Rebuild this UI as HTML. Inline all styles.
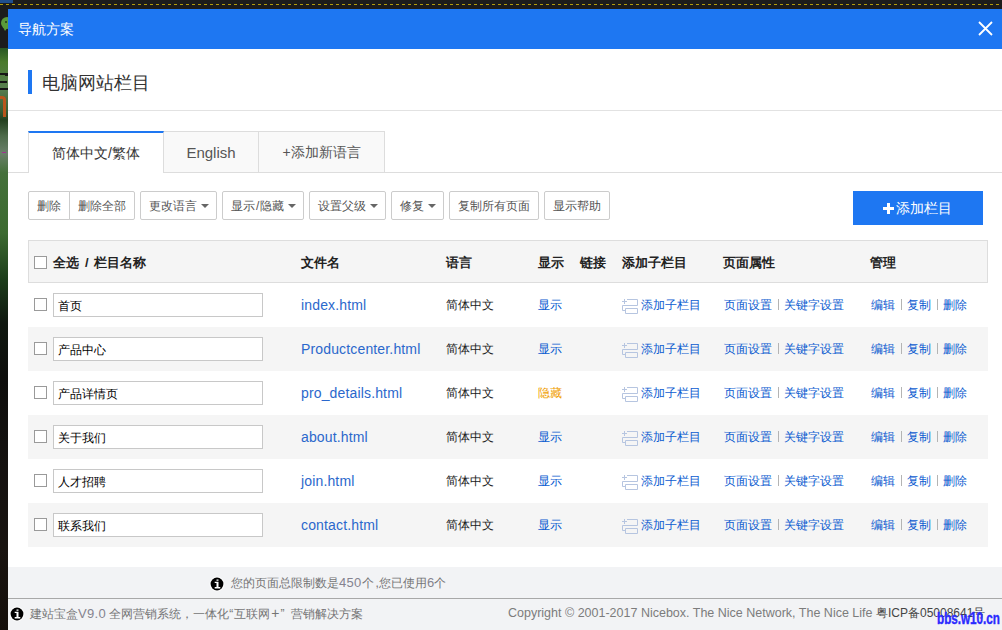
<!DOCTYPE html>
<html><head><meta charset="utf-8">
<style>
*{box-sizing:border-box;margin:0;padding:0}
html,body{width:1002px;height:630px;overflow:hidden}
body{position:relative;background:#1c1c1c;font-family:"Liberation Sans",sans-serif;color:#333}
.a{position:absolute;white-space:nowrap}
#topbar{left:0;top:0;width:13px;height:3px;background:#1f4f8f}
#dash{left:0;top:4px;width:1002px;height:1px;background:repeating-linear-gradient(90deg,#b39c0c 0 3px,transparent 3px 6px)}
#strip{left:0;top:48px;width:8px;height:582px;background:linear-gradient(180deg,#285622 0,#4a7a2c 14px,#587f50 40px,#3a5f35 62px,#24401f 72px,#4d6a4a 88px,#6a806a 105px,#44703a 125px,#3c6a30 185px,#1c3c1a 232px,#101810 275px,#0e0e0c 330px,#151210 420px,#191410 500px,#140e0a 582px)}
#modal{left:8px;top:9px;width:994px;height:621px;background:#fff}
#hdr{left:8px;top:9px;width:994px;height:40px;background:#1e77f2}
#hdr .t{left:10px;top:12px;font-size:14px;line-height:16px;color:#fff}
#close{left:970px;top:12px;width:15px;height:15px}
#bar{left:28px;top:70px;width:4px;height:24px;background:#1e77f2}
#sect{left:42px;top:73px;font-size:18px;line-height:20px;color:#333}
#div1{left:8px;top:110px;width:994px;height:1px;background:#e2e2e2}
#tabline{left:8px;top:172px;width:994px;height:1px;background:#ddd}
.tab{position:absolute;top:131px;height:41px;border:1px solid #ddd;border-bottom:none;background:#f9f9f9;font-size:14px;line-height:41px;text-align:center;color:#555}
.tab.on{background:#fff;border-top:2px solid #1e77f2;height:42px;z-index:2;color:#333;line-height:41px}
.btn{position:absolute;top:191px;height:29px;border:1px solid #ccc;border-radius:2px;background:#fff;font-size:12px;line-height:29px;color:#555;padding:0 8px;white-space:nowrap}
.caret{display:inline-block;width:0;height:0;border-left:4px solid transparent;border-right:4px solid transparent;border-top:4px solid #666;vertical-align:middle;margin-left:4px;margin-top:-2px}
#add{left:853px;top:191px;width:130px;height:34px;background:#1e77f2;color:#fff;font-size:14px;line-height:34px}
.plus{position:absolute;left:30px;top:12px;width:11px;height:11px;background:linear-gradient(#fff,#fff) center/3px 11px no-repeat,linear-gradient(#fff,#fff) center/11px 3px no-repeat}
.at{position:absolute;left:43px;top:0}
#thead{left:28px;top:240px;width:960px;height:43px;background:#f5f5f5;border:1px solid #ddd}
.row{left:28px;width:960px;height:44px}
.row.s{background:#f5f5f5}
.cb{width:13px;height:13px;border:1px solid #9a9a9a;background:#fff}
.c{font-size:12px;line-height:45px;color:#222}
.h{font-size:13px;font-weight:bold;color:#222;line-height:45px}
.sl{margin:0 5px 0 6px}
.inp{width:210px;height:24px;border:1px solid #c8c8c8;background:#fff;font-size:12px;line-height:24px;padding-left:4px;color:#000}
.fn{font-size:14px;color:#2b68cc;letter-spacing:.15px}
.lk{color:#0b5bd0}
.sep{display:inline-block;width:1px;height:11px;background:#b4b4b4;vertical-align:middle;margin:-2px 5px 0 6px}
.hid{color:#f0a000}
.ic{vertical-align:middle;margin-right:3px;margin-top:-2px}
#foot1{left:8px;top:567px;width:994px;height:31px;background:#f2f3f5}
#fline{left:8px;top:598px;width:994px;height:1px;background:#a8a8a8}
#foot2{left:8px;top:599px;width:994px;height:31px;background:#f2f3f5}
.ftxt{font-size:12px;line-height:31px;color:#757575}
.dg{font-size:13px;letter-spacing:.3px;color:#85838f}
.copy{font-size:12.5px;color:#7c7c7c}
.info{display:inline-block;vertical-align:middle;margin:-3px 0 0 -1px;position:relative;top:1.5px}
.wm{font-family:"Liberation Sans",sans-serif;font-weight:bold;font-size:16px;line-height:16px;color:#2a2aff;-webkit-text-stroke:.4px #2a2aff;transform:scaleX(.73);transform-origin:0 0}
#wx{left:1px;top:17px;width:12px;height:12px;border-radius:50%;background:#5a9a3a}
#wxt{left:3px;top:27px;width:0;height:0;border-left:2px solid transparent;border-right:3px solid transparent;border-top:4px solid #5a9a3a}
#ch1{left:0;top:73px;width:8px;height:17px;border-top:2px solid #151515;border-bottom:2px solid #151515}
#ch2{left:0;top:81px;width:7px;height:2px;background:#151515;box-shadow:5px -7px 0 0 #151515}
#org{left:0;top:96px;width:6px;height:21px;border-top:3px solid #b9561c;border-right:3px solid #b9561c;border-radius:0 4px 0 0}
#mg{left:2px;top:152px;width:4px;height:1px;background:#a03090}
#wxe{left:5px;top:21px;width:2px;height:2px;background:#203a18;border-radius:50%}

</style></head><body>
<div class="a" id="topbar"></div><div class="a" id="dash"></div><div class="a" id="strip"></div>
<div class="a" id="wx"></div><div class="a" id="wxt"></div><div class="a" id="ch1"></div><div class="a" id="ch2"></div><div class="a" id="org"></div><div class="a" id="mg"></div><div class="a" id="wxe"></div>
<div class="a" id="modal"></div>
<div class="a" id="hdr"><div class="a t">导航方案</div><svg class="a" id="close" viewBox="0 0 15 15"><path d="M1 1L14 14M14 1L1 14" stroke="#fff" stroke-width="1.8"/></svg></div>
<div class="a" id="bar"></div><div class="a" id="sect">电脑网站栏目</div><div class="a" id="div1"></div><div class="a" id="tabline"></div>
<div class="tab on" style="left:28px;width:136px">简体中文/繁体</div><div class="tab" style="left:163px;width:96px;font-size:15px">English</div><div class="tab" style="left:258px;width:127px">+添加新语言</div>
<div class="btn" style="left:28px;width:42px;border-radius:2px 0 0 2px">删除</div>
<div class="btn" style="left:69px;width:66px;border-radius:0 2px 2px 0">删除全部</div>
<div class="btn" style="left:140px;width:77px">更改语言<span class="caret"></span></div>
<div class="btn" style="left:222px;width:82px">显示<span style='margin:0 1px'>/</span>隐藏<span class="caret"></span></div>
<div class="btn" style="left:309px;width:77px">设置父级<span class="caret"></span></div>
<div class="btn" style="left:391px;width:53px">修复<span class="caret"></span></div>
<div class="btn" style="left:449px;width:90px">复制所有页面</div>
<div class="btn" style="left:544px;width:66px">显示帮助</div>
<div class="a" id="add"><span class="plus"></span><span class="at">添加栏目</span></div>
<div class="a" id="thead"></div>
<div class="a cb" style="left:34px;top:256px"></div>
<div class="a h" style="left:53px;top:240px">全选<span class=sl>/</span>栏目名称</div>
<div class="a h" style="left:301px;top:240px">文件名</div>
<div class="a h" style="left:446px;top:240px">语言</div>
<div class="a h" style="left:538px;top:240px">显示</div>
<div class="a h" style="left:580px;top:240px">链接</div>
<div class="a h" style="left:622px;top:240px">添加子栏目</div>
<div class="a h" style="left:723px;top:240px">页面属性</div>
<div class="a h" style="left:870px;top:240px">管理</div>
<div class="a cb" style="left:34px;top:298px"></div>
<div class="a inp" style="left:53px;top:293px">首页</div>
<div class="a c fn" style="left:301px;top:283px">index.html</div>
<div class="a c" style="left:446px;top:283px">简体中文</div>
<div class="a c lk" style="left:538px;top:283px">显示</div>
<svg class="a" width="17" height="16" viewBox="0 0 17 16" style="left:622px;top:299px"><path d="M2.5 0v5M0 2.5h5M5 0.5h10.5v6H0.5V11.5H3.5M3.5 9.5h12v5h-12z" stroke="#b6c5e0" stroke-width="1" fill="none"/></svg>
<div class="a c lk" style="left:641px;top:283px">添加子栏目</div>
<div class="a c lk" style="left:724px;top:283px">页面设置<span class="sep"></span>关键字设置</div>
<div class="a c lk" style="left:871px;top:283px">编辑<span class="sep"></span>复制<span class="sep"></span>删除</div>
<div class="a row s" style="top:327px"></div>
<div class="a cb" style="left:34px;top:342px"></div>
<div class="a inp" style="left:53px;top:337px">产品中心</div>
<div class="a c fn" style="left:301px;top:327px">Productcenter.html</div>
<div class="a c" style="left:446px;top:327px">简体中文</div>
<div class="a c lk" style="left:538px;top:327px">显示</div>
<svg class="a" width="17" height="16" viewBox="0 0 17 16" style="left:622px;top:343px"><path d="M2.5 0v5M0 2.5h5M5 0.5h10.5v6H0.5V11.5H3.5M3.5 9.5h12v5h-12z" stroke="#b6c5e0" stroke-width="1" fill="none"/></svg>
<div class="a c lk" style="left:641px;top:327px">添加子栏目</div>
<div class="a c lk" style="left:724px;top:327px">页面设置<span class="sep"></span>关键字设置</div>
<div class="a c lk" style="left:871px;top:327px">编辑<span class="sep"></span>复制<span class="sep"></span>删除</div>
<div class="a cb" style="left:34px;top:386px"></div>
<div class="a inp" style="left:53px;top:381px">产品详情页</div>
<div class="a c fn" style="left:301px;top:371px">pro_details.html</div>
<div class="a c" style="left:446px;top:371px">简体中文</div>
<div class="a c hid" style="left:538px;top:371px">隐藏</div>
<svg class="a" width="17" height="16" viewBox="0 0 17 16" style="left:622px;top:387px"><path d="M2.5 0v5M0 2.5h5M5 0.5h10.5v6H0.5V11.5H3.5M3.5 9.5h12v5h-12z" stroke="#b6c5e0" stroke-width="1" fill="none"/></svg>
<div class="a c lk" style="left:641px;top:371px">添加子栏目</div>
<div class="a c lk" style="left:724px;top:371px">页面设置<span class="sep"></span>关键字设置</div>
<div class="a c lk" style="left:871px;top:371px">编辑<span class="sep"></span>复制<span class="sep"></span>删除</div>
<div class="a row s" style="top:415px"></div>
<div class="a cb" style="left:34px;top:430px"></div>
<div class="a inp" style="left:53px;top:425px">关于我们</div>
<div class="a c fn" style="left:301px;top:415px">about.html</div>
<div class="a c" style="left:446px;top:415px">简体中文</div>
<div class="a c lk" style="left:538px;top:415px">显示</div>
<svg class="a" width="17" height="16" viewBox="0 0 17 16" style="left:622px;top:431px"><path d="M2.5 0v5M0 2.5h5M5 0.5h10.5v6H0.5V11.5H3.5M3.5 9.5h12v5h-12z" stroke="#b6c5e0" stroke-width="1" fill="none"/></svg>
<div class="a c lk" style="left:641px;top:415px">添加子栏目</div>
<div class="a c lk" style="left:724px;top:415px">页面设置<span class="sep"></span>关键字设置</div>
<div class="a c lk" style="left:871px;top:415px">编辑<span class="sep"></span>复制<span class="sep"></span>删除</div>
<div class="a cb" style="left:34px;top:474px"></div>
<div class="a inp" style="left:53px;top:469px">人才招聘</div>
<div class="a c fn" style="left:301px;top:459px">join.html</div>
<div class="a c" style="left:446px;top:459px">简体中文</div>
<div class="a c lk" style="left:538px;top:459px">显示</div>
<svg class="a" width="17" height="16" viewBox="0 0 17 16" style="left:622px;top:475px"><path d="M2.5 0v5M0 2.5h5M5 0.5h10.5v6H0.5V11.5H3.5M3.5 9.5h12v5h-12z" stroke="#b6c5e0" stroke-width="1" fill="none"/></svg>
<div class="a c lk" style="left:641px;top:459px">添加子栏目</div>
<div class="a c lk" style="left:724px;top:459px">页面设置<span class="sep"></span>关键字设置</div>
<div class="a c lk" style="left:871px;top:459px">编辑<span class="sep"></span>复制<span class="sep"></span>删除</div>
<div class="a row s" style="top:503px"></div>
<div class="a cb" style="left:34px;top:518px"></div>
<div class="a inp" style="left:53px;top:513px">联系我们</div>
<div class="a c fn" style="left:301px;top:503px">contact.html</div>
<div class="a c" style="left:446px;top:503px">简体中文</div>
<div class="a c lk" style="left:538px;top:503px">显示</div>
<svg class="a" width="17" height="16" viewBox="0 0 17 16" style="left:622px;top:519px"><path d="M2.5 0v5M0 2.5h5M5 0.5h10.5v6H0.5V11.5H3.5M3.5 9.5h12v5h-12z" stroke="#b6c5e0" stroke-width="1" fill="none"/></svg>
<div class="a c lk" style="left:641px;top:503px">添加子栏目</div>
<div class="a c lk" style="left:724px;top:503px">页面设置<span class="sep"></span>关键字设置</div>
<div class="a c lk" style="left:871px;top:503px">编辑<span class="sep"></span>复制<span class="sep"></span>删除</div>
<div class="a" id="foot1"></div><div class="a" id="fline"></div><div class="a" id="foot2"></div>
<div class="a ftxt" style="left:210px;top:567px"><svg class=info width="16" height="16" viewBox="-1.5 -1.5 16 16"><circle cx="6.5" cy="6.5" r="7.6" fill="#fff" opacity=".8"/><circle cx="6.5" cy="6.5" r="6.4" fill="#000"/><path d="M6 2h2v1.2H6zM4.2 4.2H8V9.6h1.8v1.4H4.2V9.6H6V5.4H4.2z" fill="#fff"/></svg><span style="margin-left:6px">您的页面总限制数是<span class=dg>450</span>个<span style="margin-left:2px">,</span>您已使用<span class=dg>6</span>个</span></div>
<div class="a ftxt" style="left:8px;top:598px"><svg class=info style="top:1px;margin-left:1px;margin-right:-1px" width="16" height="16" viewBox="-1.5 -1.5 16 16"><circle cx="6.5" cy="6.5" r="7.6" fill="#fff" opacity=".8"/><circle cx="6.5" cy="6.5" r="6.4" fill="#000"/><path d="M6 2h2v1.2H6zM4.2 4.2H8V9.6h1.8v1.4H4.2V9.6H6V5.4H4.2z" fill="#fff"/></svg><span style="margin-left:6px">建站宝盒<span class=dg>V9.0</span> 全网营销系统，一体化<span style="margin-right:1px">“</span>互联网<span style="font-size:14px;margin:0 1px">+</span>”<span style="margin-left:3px"> </span>营销解决方案</span></div>
<div class="a ftxt copy" style="left:508px;top:598px">Copyright © 2001-2017 Nicebox. The Nice Network, The Nice Life <span style="color:#444;font-size:12px">粤ICP备05008641号</span></div>
<div class="a wm" style="left:937px;top:611px">bbs.w10.cn</div>
</body></html>
